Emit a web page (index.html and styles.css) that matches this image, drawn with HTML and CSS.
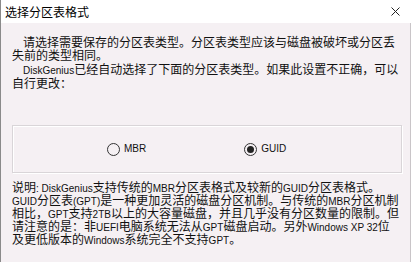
FILE: index.html
```html
<!DOCTYPE html>
<html>
<head>
<meta charset="utf-8">
<link rel="stylesheet" href="styles.css">
</head>
<body>
<div class="dialog">
  <div class="titlebar">
    <span class="title">选择分区表格式</span>
    <svg class="close" width="9" height="9" viewBox="0 0 9 9"><path d="M0.5 0.5 L8.5 8.5 M8.5 0.5 L0.5 8.5" stroke="#222" stroke-width="1" fill="none"/></svg>
  </div>
  <div class="body">
    <div class="intro">
      <p class="para"><span class="line indent">请选择需要保存的分区表类型。分区表类型应该与磁盘被破坏或分区丢</span><span class="line">失前的类型相同。</span></p>
      <p class="para second"><span class="line indent"><span class="lat">DiskGenius</span>已经自动选择了下面的分区表类型。如果此设置不正确，可以</span><span class="line">自行更改：</span></p>
    </div>
    <div class="group">
      <label class="radio"><span class="dot"></span><span class="lat">MBR</span></label>
      <label class="radio"><span class="dot checked"></span><span class="lat">GUID</span></label>
    </div>
    <div class="desc">
      <span class="line">说明<span class="lat">: DiskGenius</span>支持传统的<span class="lat">MBR</span>分区表格式及较新的<span class="lat">GUID</span>分区表格式。</span>
      <span class="line"><span class="lat">GUID</span>分区表<span class="lat">(GPT)</span>是一种更加灵活的磁盘分区机制。与传统的<span class="lat">MBR</span>分区机制</span>
      <span class="line">相比，<span class="lat">GPT</span>支持<span class="lat">2TB</span>以上的大容量磁盘，并且几乎没有分区数量的限制。但</span>
      <span class="line">请注意的是：非<span class="lat">UEFI</span>电脑系统无法从<span class="lat">GPT</span>磁盘启动。另外<span class="lat">Windows XP 32</span>位</span>
      <span class="line">及更低版本的<span class="lat">Windows</span>系统完全不支持<span class="lat">GPT</span>。</span>
    </div>
  </div>
</div>
</body>
</html>
```
FILE: styles.css
```css
html, body {
  margin: 0;
  padding: 0;
  background: #ffffff;
}
body {
  width: 413px;
  height: 262px;
  overflow: hidden;
  font-family: "Noto Sans CJK SC", sans-serif;
  font-size: 12px;
  color: #111;
}
.dialog {
  width: 413px;
  height: 262px;
  display: flex;
  flex-direction: column;
}
.titlebar {
  height: 23px;
  background: #ffffff;
  display: flex;
  align-items: center;
  justify-content: space-between;
  padding: 0 13px 0 4px;
  box-sizing: border-box;
  border-left: 1px solid #8a8a8a;
}
.title {
  font-size: 12px;
  line-height: 14px;
  color: #000;
}
.close {
  display: block;
}
.body {
  flex: 1;
  background: #f5f0f3;
  border-left: 1px solid #8a8a8a;
  border-right: 1px solid #c9c5c8;
  margin-right: 2px;
  padding: 12px 8px 0 11px;
  display: flex;
  flex-direction: column;
}
.intro {
  height: 90px;
}
.para {
  margin: 0;
  line-height: 13px;
}
.para.second {
  margin-top: 1px;
}
.line {
  display: block;
  white-space: nowrap;
}
.indent {
  padding-left: 11px;
}
.lat {
  font-family: "Liberation Sans", sans-serif;
  font-size: 10px;
  line-height: 10px;
}
.group {
  height: 46px;
  border: 1px solid #d9d5d8;
  box-shadow: inset 1px 1px 0 #ffffff, 1px 1px 0 #ffffff;
  display: flex;
  align-items: center;
  padding-left: 94px;
  gap: 98px;
}
.radio {
  display: flex;
  align-items: center;
  gap: 4px;
  font-size: 12px;
}
.dot {
  width: 11px;
  height: 11px;
  border: 1px solid #333;
  border-radius: 50%;
  background: #f5f0f3;
  display: flex;
  align-items: center;
  justify-content: center;
}
.dot.checked::after {
  content: "";
  width: 7px;
  height: 7px;
  border-radius: 50%;
  background: #222;
}
.desc {
  margin-top: 8px;
  line-height: 12.3px;
}
```
